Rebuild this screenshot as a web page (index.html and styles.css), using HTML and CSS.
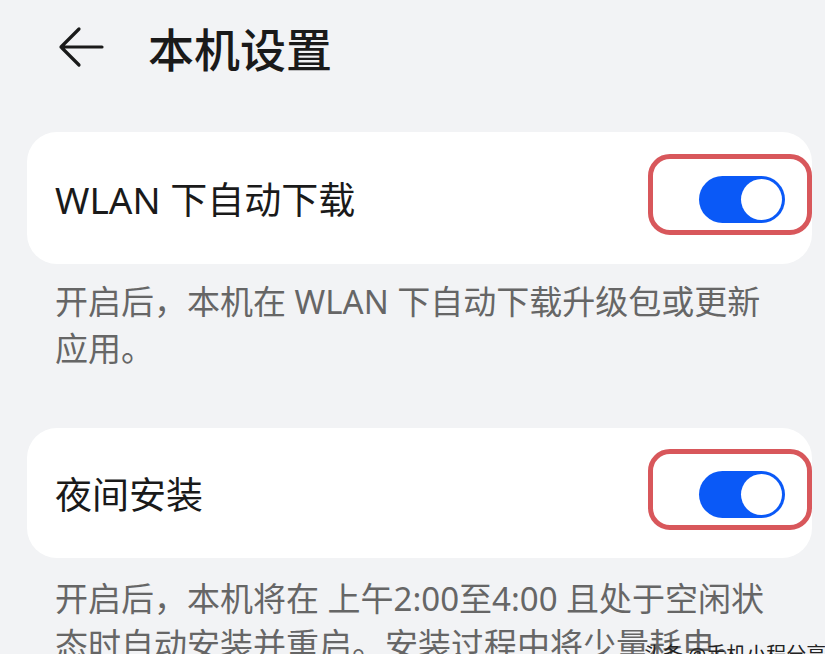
FILE: index.html
```html
<!DOCTYPE html>
<html lang="zh-CN">
<head>
    <meta charset="UTF-8">
    <meta name="viewport" content="width=device-width, initial-scale=1.0">
    <title>本机设置</title>
    <link rel="stylesheet" href="styles.css">
</head>
<body>
    <header class="top-bar">
        <svg class="back-icon" width="46" height="42" viewBox="0 0 46 42">
            <path d="M44 21 H3 M21 3 L3 21 L21 39" fill="none" stroke="#1a1a1a" stroke-width="3.2" stroke-linecap="round" stroke-linejoin="round"/>
        </svg>
        <h1 class="page-title">本机设置</h1>
    </header>

    <main class="settings">
        <div class="setting-card">
            <span class="setting-label">WLAN 下自动下载</span>
            <div class="switch-wrap">
                <div class="switch on"><span class="knob"></span></div>
                <div class="mark"></div>
            </div>
        </div>
        <p class="setting-desc">开启后，本机在 WLAN 下自动下载升级包或更新应用。</p>

        <div class="setting-card second">
            <span class="setting-label">夜间安装</span>
            <div class="switch-wrap">
                <div class="switch on"><span class="knob"></span></div>
                <div class="mark"></div>
            </div>
        </div>
        <p class="setting-desc bottom">开启后，本机将在 上午2:00至4:00 且处于空闲状态时自动安装并重启。安装过程中将少量耗电。</p>
    </main>

    <div class="watermark">头条 @手机小程分享</div>
</body>
</html>
```

FILE: styles.css
```css
* {
    margin: 0;
    padding: 0;
    box-sizing: border-box;
}

body {
    font-family: "Noto Sans", "Noto Sans CJK SC", sans-serif;
    background: #f2f3f5;
    color: #1a1a1a;
    width: 825px;
    height: 654px;
    overflow: hidden;
    position: relative;
}

.top-bar {
    display: flex;
    align-items: center;
    height: 96px;
    padding-left: 58px;
    padding-bottom: 2px;
}

.back-icon {
    flex-shrink: 0;
}

.page-title {
    font-size: 46px;
    font-weight: 500;
    margin-left: 44px;
    color: #1a1a1a;
}

.settings {
    padding: 36px 13px 0 27px;
}

.setting-card {
    display: flex;
    align-items: center;
    justify-content: space-between;
    height: 132px;
    background: #ffffff;
    border-radius: 30px;
    padding: 0 27px 0 28px;
}

.setting-card.second {
    margin-top: 56px;
    height: 130px;
}

.setting-label {
    font-size: 37px;
    font-weight: 400;
    color: #1a1a1a;
}

.switch-wrap {
    position: relative;
    margin-top: 2px;
}

.switch {
    width: 86px;
    height: 47px;
    border-radius: 24px;
    background: #ccc;
    position: relative;
}

.switch.on {
    background: #0a59f7;
}

.knob {
    position: absolute;
    top: 3px;
    right: 3px;
    width: 41px;
    height: 41px;
    border-radius: 50%;
    background: #ffffff;
}

/* cadre rouge d'annotation */
.mark {
    position: absolute;
    top: -22px;
    bottom: -12px;
    left: -51px;
    right: -27px;
    border: 5px solid #d8575b;
    border-radius: 22px;
}

.setting-desc {
    width: 748px;
    font-size: 33px;
    line-height: 47px;
    color: #666666;
    padding: 14px 0 0 28px;
}

.setting-desc.bottom {
    padding-top: 18px;
    line-height: 46px;
}

.watermark {
    position: absolute;
    left: 643px;
    top: 639px;
    font-size: 20px;
    color: #222;
    white-space: nowrap;
}
```
